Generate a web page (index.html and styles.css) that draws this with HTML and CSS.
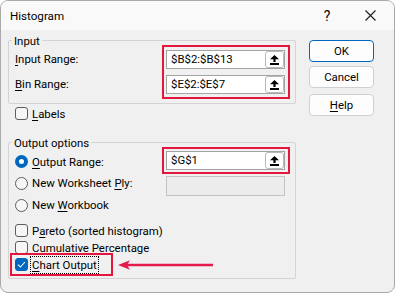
FILE: index.html
```html
<!DOCTYPE html>
<html>
<head>
<meta charset="utf-8">
<title>Histogram</title>
<link rel="stylesheet" href="styles.css">
</head>
<body>
<div class="window">
  <div class="titlebar">
    <span class="title">Histogram</span>
    <span class="help-q">?</span>
    <span class="close">
      <svg width="11" height="11" viewBox="0 0 11 11"><path d="M0.5 0.5 L10.5 10.5 M10.5 0.5 L0.5 10.5" stroke="#1b1b1b" stroke-width="1.1" fill="none"/></svg>
    </span>
  </div>
  <div class="content">
    <div class="left">
      <div class="group group-input">
        <span class="legend">Input</span>
        <div class="input-rows">
          <div class="label-col">
            <div class="lbl"><u>I</u>nput Range:</div>
            <div class="lbl"><u>B</u>in Range:</div>
          </div>
          <div class="hl hl-input">
            <div class="field"><span class="val">$B$2:$B$13</span><span class="pick"><svg width="9" height="10" viewBox="0 0 9 10"><polygon points="4.5,0 9,4.2 5.6,4.2 5.6,7 3.4,7 3.4,4.2 0,4.2" fill="#000"/><rect x="0" y="8" width="9" height="2" fill="#000"/></svg></span></div>
            <div class="field"><span class="val">$E$2:$E$7</span><span class="pick"><svg width="9" height="10" viewBox="0 0 9 10"><polygon points="4.5,0 9,4.2 5.6,4.2 5.6,7 3.4,7 3.4,4.2 0,4.2" fill="#000"/><rect x="0" y="8" width="9" height="2" fill="#000"/></svg></span></div>
          </div>
        </div>
      </div>

      <div class="opt labels-row"><span class="cb"></span><span class="txt"><u>L</u>abels</span></div>

      <div class="group group-output">
        <span class="legend">Output options</span>
        <div class="out-grid">
          <div class="opt row-a"><span class="radio on"></span><span class="txt"><u>O</u>utput Range:</span></div>
          <div class="hl hl-output">
            <div class="field"><span class="val">$G$1</span><span class="pick"><svg width="9" height="10" viewBox="0 0 9 10"><polygon points="4.5,0 9,4.2 5.6,4.2 5.6,7 3.4,7 3.4,4.2 0,4.2" fill="#000"/><rect x="0" y="8" width="9" height="2" fill="#000"/></svg></span></div>
          </div>
          <div class="opt row-b"><span class="radio"></span><span class="txt">New Worksheet <u>P</u>ly:</span></div>
          <div class="field-off"></div>
          <div class="opt row-c"><span class="radio"></span><span class="txt">New <u>W</u>orkbook</span></div>
        </div>
        <div class="checks">
          <div class="opt ck"><span class="cb"></span><span class="txt">P<u>a</u>reto (sorted histogram)</span></div>
          <div class="opt ck"><span class="cb"></span><span class="txt">Cumulative Percentage</span></div>
          <div class="opt ck"><span class="cb on"><svg width="9" height="7" viewBox="0 0 9 7"><path d="M1 3.6 L3.4 6 L8 1" stroke="#fff" stroke-width="1.1" fill="none"/></svg></span><span class="txt focus"><u>C</u>hart Output</span></div>
        </div>
      </div>
    </div>

    <div class="buttons">
      <div class="btn default">OK</div>
      <div class="btn">Cancel</div>
      <div class="btn help"><u>H</u>elp</div>
    </div>
  </div>

  <div class="annot-box"></div>
  <svg class="annot-arrow" width="96" height="14" viewBox="0 0 96 14">
    <line x1="7" y1="7" x2="95" y2="7" stroke="#e6194b" stroke-width="2.4"/>
    <polygon points="0,7 12,2.2 9,7 12,11.8" fill="#e6194b"/>
  </svg>
</div>
</body>
</html>
```

FILE: styles.css
```css
html, body {
  margin: 0;
  padding: 0;
  background: #ffffff;
}

body {
  font-family: Roboto, "Noto Sans", sans-serif;
  font-size: 11.4px;
  color: #000;
}

u {
  text-decoration: underline;
  text-underline-offset: 2px;
  text-decoration-thickness: 1px;
}

.window {
  position: relative;
  box-sizing: border-box;
  width: 395px;
  height: 293px;
  border: 1px solid #a9a9a9;
  border-radius: 8px;
  background: #f0f0f0;
  overflow: hidden;
}

.titlebar {
  height: 29px;
  display: flex;
  align-items: center;
  background: #f9f9f9;
  padding-left: 9px;
}

.title {
  font-size: 11.6px;
  line-height: 16px;
}

.help-q {
  margin-left: auto;
  font-size: 14px;
  line-height: 16px;
  width: 12px;
  text-align: center;
}

.close {
  display: flex;
  margin-left: 32px;
  margin-right: 18px;
}

.content {
  display: flex;
  align-items: flex-start;
  padding: 10px 0 0 7px;
}

.left {
  width: 288px;
  display: flex;
  flex-direction: column;
}

.group {
  box-sizing: border-box;
  width: 288px;
  border: 1px solid #d4d4d4;
  border-radius: 2px;
  padding: 0 0 4px 6px;
}

.legend {
  display: block;
  width: max-content;
  height: 16px;
  line-height: 16px;
  margin: -8px 0 -4px -3px;
  padding: 0 2px;
  background: #f0f0f0;
}

.input-rows {
  display: flex;
}

.label-col {
  width: 147px;
  padding-top: 5px;
  display: flex;
  flex-direction: column;
  gap: 6px;
}

.lbl {
  height: 19px;
  line-height: 19px;
}

.hl {
  box-sizing: border-box;
  width: 128px;
  border: 2px solid #e3173e;
}

.hl-input {
  padding: 3px 3px 3px 2px;
  display: flex;
  flex-direction: column;
  gap: 6px;
}

.hl-output {
  padding: 2px 3px 2px 2px;
}

.field {
  box-sizing: border-box;
  width: 119px;
  height: 19px;
  border: 1px solid #a3a3a3;
  background: #fff;
  display: flex;
  align-items: center;
}

.val {
  padding-left: 4px;
  line-height: 17px;
}

.pick {
  margin-left: auto;
  box-sizing: border-box;
  width: 19px;
  height: 17px;
  border: 1px solid #b9b9b9;
  border-radius: 3px;
  background: #fff;
  display: flex;
  align-items: center;
  justify-content: center;
}

.opt {
  display: flex;
  align-items: center;
  height: 17px;
}

.txt {
  line-height: 16px;
  margin-left: 4px;
}

.labels-row {
  margin-top: 1px;
  padding-left: 7px;
}

.group-output {
  margin-top: 20px;
  padding-bottom: 5px;
}

.out-grid {
  display: grid;
  grid-template-columns: 147px 128px;
  grid-template-rows: 27px 22px 18px;
}

.row-a {
  height: 27px;
  padding-top: 2px;
  box-sizing: border-box;
}

.row-b {
  height: 16px;
  margin-top: 1px;
}

.row-c {
  height: 18px;
}

.field-off {
  box-sizing: border-box;
  width: 119px;
  height: 20px;
  margin: 2px 0 0 4px;
  border: 1px solid #c4c4c4;
  background: #ececec;
}

.checks {
  margin-top: 8px;
  display: flex;
  flex-direction: column;
}

.cb {
  box-sizing: border-box;
  width: 13px;
  height: 13px;
  border: 1px solid #5e5e5e;
  border-radius: 3px;
  background: #f6f6f6;
  display: flex;
  align-items: center;
  justify-content: center;
  flex: none;
}

.cb.on {
  background: #0067c0;
  border-color: #0067c0;
}

.radio {
  box-sizing: border-box;
  width: 13px;
  height: 13px;
  border: 1px solid #5e5e5e;
  border-radius: 50%;
  background: #f6f6f6;
  flex: none;
}

.radio.on {
  border: 4px solid #0067c0;
  background: #fff;
}

.focus {
  outline: 1px dotted #000;
  padding: 0 1px;
  margin-left: 3px;
}

.buttons {
  margin-left: 13px;
  width: 65px;
  display: flex;
  flex-direction: column;
}

.btn {
  box-sizing: border-box;
  height: 22px;
  border: 1px solid #d0d0d0;
  border-radius: 4px;
  background: #fdfdfd;
  display: flex;
  align-items: center;
  justify-content: center;
  line-height: 16px;
}

.btn + .btn {
  margin-top: 4px;
}

.btn.help {
  margin-top: 6px;
}

.btn.default {
  border: 1px solid #0067c0;
  box-shadow: inset 0 0 0 1px #ffffff;
}

.annot-box {
  position: absolute;
  left: 9px;
  top: 252px;
  width: 103px;
  height: 23px;
  box-sizing: border-box;
  border: 2px solid #e3173e;
}

.annot-arrow {
  position: absolute;
  left: 117px;
  top: 257px;
}
```
